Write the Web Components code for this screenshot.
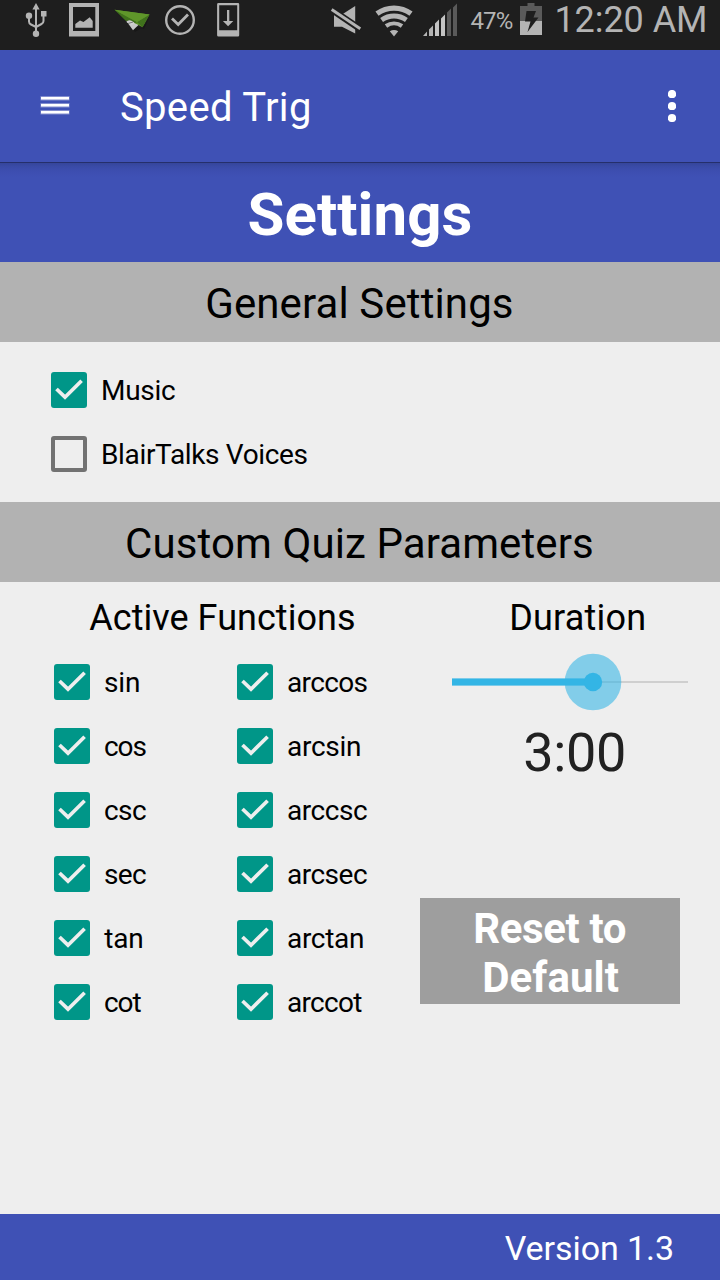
<!DOCTYPE html>
<html lang="en">
<head>
<meta charset="utf-8">
<title>Speed Trig</title>
<style>
  html, body { margin: 0; height: 100%; background: #eee; }
  body { font-family: Roboto, "Liberation Sans", sans-serif; overflow: hidden; }
</style>
</head>
<body>
<settings-app></settings-app>
<script>
const ctx = document.createElement('canvas').getContext('2d');

function define(name, html, setup) {
  const template = document.createElement('template');
  template.innerHTML = html;
  customElements.define(name, class extends HTMLElement {
    constructor() {
      super();
      this.attachShadow({ mode: 'open' }).append(template.content.cloneNode(true));
    }
    connectedCallback() { if (setup) setup(this, this.shadowRoot); }
  });
}

/* A single line of text, tracked so that its visible glyphs span `span` pixels. */
define('text-run', `<style>
  :host { display: block; flex: none; white-space: nowrap; }
  span { display: block; }
</style><span><slot></slot></span>`, (el, root) => {
  const size = +el.getAttribute('size');
  const span = +el.getAttribute('span');
  const weight = el.getAttribute('weight') || 400;
  const text = el.textContent;
  ctx.font = weight + ' ' + size + 'px Roboto';
  const m = ctx.measureText(text);
  const ink = m.actualBoundingBoxRight + m.actualBoundingBoxLeft;
  const s = root.querySelector('span').style;
  el.style.width = span + 'px';
  s.fontSize = size + 'px';
  s.fontWeight = weight;
  s.lineHeight = (el.getAttribute('line') || Math.round(size * 1.172)) + 'px';
  s.letterSpacing = (span - ink) / (text.length - 1) + 'px';
  s.marginLeft = m.actualBoundingBoxLeft + 'px';
});

const icons = {
  usb: [24, 24, `<g fill="none" stroke="#b4b4b4" stroke-width="2"><path d="M36 8v26M29 17v4.500q0 2 2 3l5 2.500M43.500 15v6q0 2-2 3l-5.500 3"/></g><path fill="#b4b4b4" d="M36 3l3.600 6.500h-7.200zM41 11h5.500v5.500H41z"/><circle cx="29" cy="15.700" r="3.200" fill="#b4b4b4"/><circle cx="36" cy="33.700" r="3.200" fill="#b4b4b4"/>`],
  image: [69, 30, `<path fill="#b4b4b4" fill-rule="evenodd" d="M69 3h30v33.500H69zM73 7v24h22.300V7z"/><path fill="#b4b4b4" d="M75.300 27.700v-3.700l4.700-3.500 3.500 1.500 6.200-4.700 3 3.700v6.700z"/>`],
  plane: [112, 40, `<path fill="#111" opacity=".5" d="M129 24l6 8 8-5 7-11-6 13z"/><path fill="#c8c8c8" d="M126 20.500l7 9.800 6.500-6.300-3-4z"/><path fill="#5c9028" d="M114.500 9.800L149.500 14.500l-7 12.700-7.500-4z"/><path fill="#40721c" d="M114.500 9.800L137 22l-2 1.200-6-2.700-3 .500zM149.500 14.500L137 22l5.500 5.200z"/><path fill="#5f962a" d="M114.500 9.800L149.500 14.500 137 22z"/><path fill="#d0d0d0" d="M126.500 22q3.500-4 8 1l-3 2.500z"/><path d="M128 23.500l5-1.500" stroke="#777"/>`],
  done: [164, 32, `<circle cx="180" cy="20" r="13.800" fill="none" stroke="#b4b4b4" stroke-width="2.400"/><path fill="none" stroke="#b4b4b4" stroke-width="2.800" d="M172 18.500l6.200 6 9.800-10"/>`],
  download: [216, 24, `<path fill="#b4b4b4" fill-rule="evenodd" d="M218.500 3h19.500q1.200 0 1.200 1.200v31q0 1.300-1.200 1.300h-19.500q-1.400 0-1.400-1.300V4.200q0-1.200 1.400-1.200zM219.200 5.300v25h18V5.300z"/><path fill="#b4b4b4" d="M227 10h2.300v11h4l-5.200 5.300-5.200-5.300h4.100z"/>`],
  mute: [330, 34, `<path fill="#b4b4b4" d="M334 14.500h8L355.200 6v27.500L342 26.700h-8z"/><path stroke="#1e1e1e" stroke-width="6.500" d="M330 8.500l31 21"/><path stroke="#b4b4b4" stroke-width="2.900" d="M331.700 9.500L360.300 28.700"/>`],
  wifi: [373, 42, `<g fill="none" stroke="#b4b4b4"><path stroke-width="5.300" d="M377 13.600a29 29 0 0 1 34 0"/><path stroke-width="4.800" d="M381.600 20a21.200 21.200 0 0 1 24.800 0"/><path stroke-width="4.200" d="M386 26a14 14 0 0 1 16 0"/></g><path fill="#b4b4b4" d="M389.800 31.300a8 8 0 0 1 8.400 0L394 36.500z"/>`],
  signal: [422, 36, `<path fill="#b4b4b4" d="M423 36l4-4.500V36zM429 36v-6.500l4-4V36z"/><path fill="#c4c4c4" d="M435 36V23.500l4-4V36zM441 36V18.500l4-4V36z"/><path fill="#5a5a5a" d="M447 36V12.500l4-4V36zM453 36V7.500l4-4V36z"/>`],
  battery: [519, 24, `<path fill="#5a5a5a" d="M527.500 3h7v3h7.500v15h-22V6h7.500z"/><path fill="#b4b4b4" d="M520 21h22v14h-22z"/><path fill="#1e1e1e" d="M526.500 11h9.500l-2.500 6.500h5L527.500 32l3-10.500h-5.500z"/>`]
};
define('status-icon', `<style>:host{display:block;flex:none}svg{display:block}</style><svg height="50"></svg>`, (el, root) => {
  const [x, w, body] = icons[el.getAttribute('name')];
  const svg = root.querySelector('svg');
  svg.setAttribute('width', w);
  svg.setAttribute('viewBox', `${x} 0 ${w} 50`);
  svg.innerHTML = body;
});

define('status-bar', `<style>
  :host { display: flex; height: 50px; background: #1e1e1e; color: #b4b4b4; padding-left: 24px; box-sizing: border-box; }
  text-run { align-self: flex-start; }
</style>
<status-icon name="usb"></status-icon>
<status-icon name="image" style="margin-left:21px"></status-icon>
<status-icon name="plane" style="margin-left:13px"></status-icon>
<status-icon name="done" style="margin-left:12px"></status-icon>
<status-icon name="download" style="margin-left:20px"></status-icon>
<status-icon name="mute" style="margin-left:90px"></status-icon>
<status-icon name="wifi" style="margin-left:9px"></status-icon>
<status-icon name="signal" style="margin-left:7px"></status-icon>
<text-run size="24" span="42.300" line="42" style="margin-left:12.400px">47%</text-run>
<status-icon name="battery" style="margin-left:6.300px"></status-icon>
<text-run size="36" span="147.700" line="40" style="margin-left:14.400px">12:20 AM</text-run>`);

define('app-bar', `<style>
  :host { display: flex; align-items: center; height: 112px; padding: 0 44px 0 40px; box-sizing: border-box; background: #3f51b5; color: #fff; }
  div { display: flex; margin: 2px auto 0 39px; }
  svg { display: block; }
</style>
<svg width="42" height="24" viewBox="40 94 42 24"><g fill="#fff" fill-opacity=".35"><path d="M40.500 96h29v4.500h-29zM40.500 103h29v4.500h-29zM40.500 110h29v4.500h-29z"/></g><path fill="#fff" d="M41 97h28v2.500H41zM41 104h28v2.500H41zM41 111h28v2.500H41z"/></svg>
<div><slot></slot></div>
<svg width="8" height="32" viewBox="0 0 8 32" fill="#fff"><circle cx="4" cy="4" r="4.100"/><circle cx="4" cy="16" r="4.100"/><circle cx="4" cy="28" r="4.100"/></svg>`);

define('page-title', `<style>
  :host { display: flex; justify-content: center; align-items: center; height: 100px; box-sizing: border-box; padding: 5px 0 0 0; color: #fff;
    background: linear-gradient(#252f6b 0 1px, #35459b 1px, #3a4ba8 5px, #3d4eb0 9px, #3f51b5 15px); }
</style><slot></slot>`);

define('section-band', `<style>
  :host { display: flex; justify-content: center; align-items: center; height: 80px; padding: 2px 1px 0 0; box-sizing: border-box; background: #b2b2b2; color: #000; }
</style><slot></slot>`);

define('check-option', `<style>
  :host { display: flex; align-items: center; height: 64px; gap: 15px; color: #000; }
  i { flex: none; width: 36px; height: 36px; border-radius: 3px; box-sizing: border-box; border: 4px solid #727272; }
  svg { display: none; width: 36px; height: 36px; }
  :host([checked]) i { border: 0; background: #009688; }
  :host([checked]) svg { display: block; }
  text-run { margin-top: 1px; }
</style>
<i><svg viewBox="0 0 36 36"><path d="M5.500 17L14 25.200 30.600 8.700" fill="none" stroke="#eee" stroke-width="3.700"/></svg></i>
<text-run size="28"></text-run>`, (el, root) => {
  const t = document.createElement('text-run');
  t.setAttribute('size', 28);
  t.setAttribute('span', el.getAttribute('span'));
  t.setAttribute('line', 32);
  t.textContent = el.getAttribute('label');
  root.querySelector('text-run').replaceWith(t);
});

define('duration-slider', `<style>:host{display:block;height:60px}svg{display:block}</style>
<svg width="240" height="60" viewBox="450 652 240 60">
  <path d="M452 681h236v2H452z" fill="#cfcfcf"/>
  <path d="M452 678h141v8H452z" fill="#7dcbe9"/>
  <circle cx="593" cy="682" r="28.300" fill="#33b5e5" fill-opacity=".58"/>
  <path d="M452 679h141v6H452z" fill="#33b5e5"/>
  <circle cx="593" cy="682" r="9.200" fill="#33b5e5"/>
</svg>`);

define('reset-button', `<style>
  :host { display: flex; flex-direction: column; align-items: flex-start; width: 260px; height: 106px; box-sizing: border-box; padding-top: 6px; background: #9e9e9e; color: #fff; }
</style><slot></slot>`);

define('app-footer', `<style>
  :host { display: flex; justify-content: flex-end; align-items: center; height: 66px; padding: 1px 48px 0 0; box-sizing: border-box; background: #3f51b5; color: #fff; }
</style><slot></slot>`);

define('settings-app', `<style>
  :host { display: flex; flex-direction: column; width: 720px; height: 1280px; background: #eee; color: #000; }
  .general { height: 160px; padding: 16px 0 0 51px; box-sizing: border-box; }
  .general check-option { gap: 16px; }
  .quiz { display: flex; flex: 1; }
  .functions { width: 420px; flex: none; }
  .grid { display: grid; grid-template-columns: 183px 183px; padding-left: 54px; }
  .duration { width: 300px; }
  .heading { height: 68px; padding-top: 15px; box-sizing: border-box; }
</style>
<status-bar></status-bar>
<app-bar><text-run size="40" span="188.700">Speed Trig</text-run></app-bar>
<page-title><text-run size="60" weight="700" span="221">Settings</text-run></page-title>
<section-band><text-run size="42" span="304.700">General Settings</text-run></section-band>
<div class="general">
  <check-option checked label="Music" span="72"></check-option>
  <check-option label="BlairTalks Voices" span="204.600"></check-option>
</div>
<section-band><text-run size="42" span="465">Custom Quiz Parameters</text-run></section-band>
<div class="quiz">
  <div class="functions">
    <div class="heading"><text-run size="36" span="264.600" style="margin-left:89.300px">Active Functions</text-run></div>
    <div class="grid">
      <check-option checked label="sin" span="34"></check-option><check-option checked label="arccos" span="79.500"></check-option>
      <check-option checked label="cos" span="41.500"></check-option><check-option checked label="arcsin" span="72"></check-option>
      <check-option checked label="csc" span="40.900"></check-option><check-option checked label="arccsc" span="78.900"></check-option>
      <check-option checked label="sec" span="40.900"></check-option><check-option checked label="arcsec" span="78.900"></check-option>
      <check-option checked label="tan" span="38" style="gap:14.300px"></check-option><check-option checked label="arctan" span="75"></check-option>
      <check-option checked label="cot" span="36.500"></check-option><check-option checked label="arccot" span="74.200"></check-option>
    </div>
  </div>
  <div class="duration">
    <div class="heading" style="height:70px"><text-run size="36" span="133" style="margin-left:91.200px">Duration</text-run></div>
    <duration-slider style="margin-left:30px"></duration-slider>
    <text-run size="54" span="98.800" line="64" style="margin:9px 0 0 105.200px;color:#212121">3:00</text-run>
    <reset-button style="margin-top:113px">
      <text-run size="42" weight="700" span="150.500" style="margin-left:55.200px">Reset to</text-run>
      <text-run size="42" weight="700" span="134.500" style="margin-left:64.200px">Default</text-run>
    </reset-button>
  </div>
</div>
<app-footer><text-run size="34" span="167.300">Version 1.3</text-run></app-footer>`);
</script>
</body>
</html>
